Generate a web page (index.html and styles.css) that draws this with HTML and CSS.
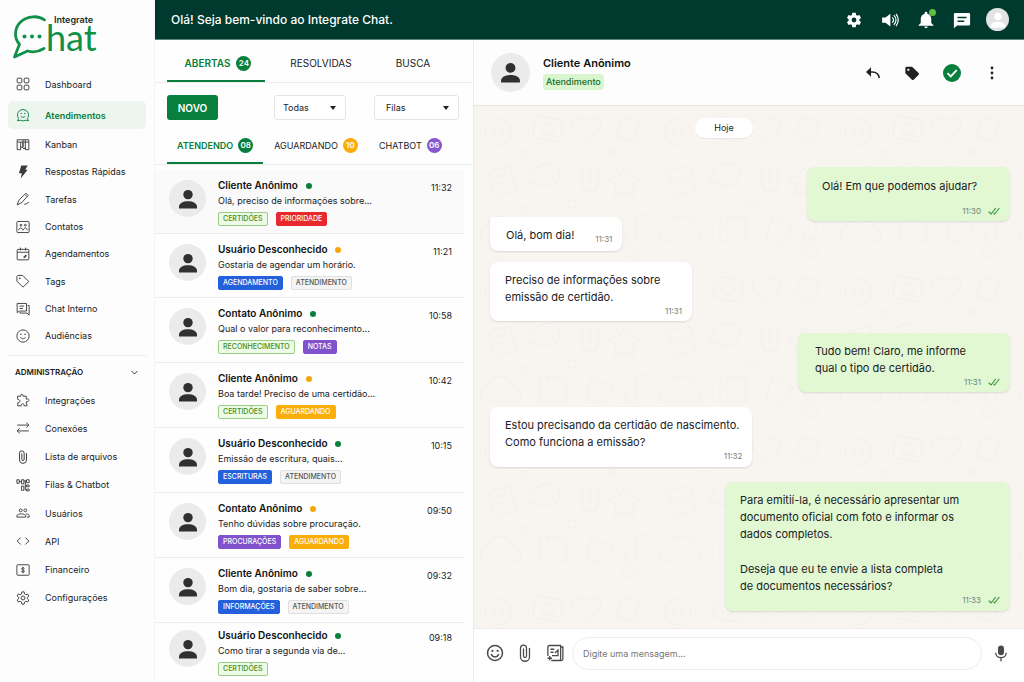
FILE: index.html
```html
<!DOCTYPE html>
<html lang="pt-BR">
<head>
<meta charset="utf-8">
<meta name="viewport" content="width=device-width, initial-scale=1">
<title>Integrate Chat</title>
<link rel="stylesheet" href="styles.css">
</head>
<body>
<svg class="sprite" aria-hidden="true">
  <symbol id="person" viewBox="0 0 20 20"><circle cx="10" cy="5.6" r="4.7"/><path d="M1 19.5v-1.6c0-3.6 4-5.6 9-5.6s9 2 9 5.6v1.6z"/></symbol>
  <symbol id="checks" viewBox="0 0 12 8"><path d="M.6 4.600 3 7 7.800 1M5.600 5.800 6.600 7l4.800-6" fill="none" stroke="currentColor" stroke-width="1.100"/></symbol>
  <symbol id="smile" viewBox="0 0 24 24"><g fill="none" stroke="currentColor" stroke-width="2"><circle cx="12" cy="12" r="10"/><path d="M7.2 14.2c1 1.9 2.800 3 4.800 3s3.800-1.100 4.800-3" stroke-linecap="round"/></g><circle cx="8.500" cy="9" r="1.500" fill="currentColor"/><circle cx="15.500" cy="9" r="1.500" fill="currentColor"/></symbol>
  <symbol id="clip" viewBox="0 0 24 24"><path d="M18 6V17a6 6 0 0 1-12 0V5.500a4 4 0 0 1 8 0V16a2 2 0 0 1-4 0V6.500" fill="none" stroke="currentColor" stroke-width="1.700" stroke-linecap="round"/></symbol>
</svg>
<div class="app">
  <aside class="sidebar">
    <a class="logo" href="#" aria-label="Integrate Chat">
      <svg viewBox="0 0 92 50" role="img" aria-label="Integrate Chat">
        <path d="M32.500 8C29 5.300 25 4.500 21 4.800 10.500 5.500 3.500 13 3.500 22c0 4 1.500 7.500 4 10.300L2.500 45l13-6c6.500 1.800 12.500 0 16.500-2.500" fill="none" stroke="#109048" stroke-width="2.800" stroke-linecap="round" stroke-linejoin="round"/>
        <circle cx="12.500" cy="24.500" r="2"/><circle cx="20" cy="24.500" r="2"/><circle cx="27.500" cy="24.500" r="2"/>
        <text class="logo-big" x="34" y="39">hat</text>
        <text class="logo-small" x="42" y="11">Integrate</text>
      </svg>
    </a>
    <nav aria-label="Principal">
      <ul class="menu menu-main">
        <li><a href="#"><svg viewBox="0 0 24 24"><g class="ln"><rect x="2" y="2" width="8" height="8" rx="1.500"/><rect x="14" y="2" width="8" height="8" rx="1.500"/><rect x="2" y="14" width="8" height="8" rx="1.500"/><rect x="14" y="14" width="8" height="8" rx="1.500"/></g></svg>Dashboard</a></li>
        <li class="current"><a href="#" aria-current="page"><svg viewBox="0 0 24 24"><g class="ln"><path d="M4.500 18A9.500 9.500 0 1 1 19.500 18l2 4-5-1a10 10 0 0 1-9 0l-5 1z"/><path d="M8 14c2 2.500 6 2.500 8 0"/></g><circle cx="9" cy="9.500" r="1.200"/><circle cx="15" cy="9.500" r="1.200"/></svg>Atendimentos</a></li>
        <li><a href="#"><svg viewBox="0 0 24 24"><g class="ln"><path d="M2 3h20v4H2zM2 7v13h6V7M8 16h4V3M12 7v9M16 3v15h-4M22 7v13h-6v-4"/></g></svg>Kanban</a></li>
        <li><a href="#"><svg viewBox="0 0 24 24"><path d="M9 1h11l-4 7h4L8 23l2-9H5z"/></svg>Respostas Rápidas</a></li>
        <li><a href="#"><svg viewBox="0 0 24 24"><g class="ln"><path d="M2 22l3-8L15 4l4 4L10 18zM15 4l2-2 4 4-2 2M14 21c3 0 6-1 8-4"/></g></svg>Tarefas</a></li>
        <li><a href="#"><svg viewBox="0 0 24 24"><g class="ln"><rect x="1.500" y="2.500" width="21" height="19" rx="1.500"/><circle cx="8.500" cy="9" r="1.600"/><circle cx="16" cy="9" r="1.600"/><path d="M4.500 17.500c1-5 6-5 7.500 0 1.500-5 6.500-5 7.500 0"/></g></svg>Contatos</a></li>
        <li><a href="#"><svg viewBox="0 0 24 24"><g class="ln"><rect x="2" y="4" width="20" height="18" rx="1.500"/><path d="M2 9h20M7.500 1V6M16.500 1V6"/></g><path d="M18 13v3l-3 3h-2v-3h2v-2z"/></svg>Agendamentos</a></li>
        <li><a href="#"><svg viewBox="0 0 24 24"><g class="ln"><path d="M1.500 4v8.500l10.500 10 10-9.500L11.500 2.500H3z" stroke-linejoin="round"/></g><circle cx="6.500" cy="7.500" r="1.300"/></svg>Tags</a></li>
        <li><a href="#"><svg viewBox="0 0 24 24"><g class="ln"><path d="M2 2.500h16v13H6.500L2 18zM6 7h8M6 11h6M20 6h2.500v16.500L19 19H7v-2"/></g></svg>Chat Interno</a></li>
        <li><a href="#"><svg viewBox="0 0 24 24"><g class="ln"><circle cx="12" cy="12" r="10.500"/><path d="M7.500 14c2 3.500 7 3.500 9 0"/></g><circle cx="8.500" cy="9" r="1.300"/><circle cx="15.500" cy="9" r="1.300"/></svg>Audiências</a></li>
      </ul>
      <button class="section" type="button" aria-expanded="true">ADMINISTRAÇÃO <svg viewBox="0 0 12 12"><path class="chevron" d="M2 4l4 4 4-4"/></svg></button>
      <ul class="menu menu-admin">
        <li><a href="#"><svg viewBox="0 0 24 24"><path class="ln" stroke-linejoin="round" d="M2.500 5.500h6C6.500 1 13.500 1 12 5.500h5.500v5c6-2 6.500 5 0 4.500l1.500 7h-5c0-5-5-5-5 0H3v-5.500c5 0 5-5 0-5.500z"/></svg>Integrações</a></li>
        <li><a href="#"><svg viewBox="0 0 24 24"><path class="ln" d="M2 7h20M17.500 2.500 22 7l-4.500 4.500M22 17H2M6.500 12.500 2 17l4.500 4.500"/></svg>Conexões</a></li>
        <li><a href="#"><svg viewBox="0 0 24 24"><use href="#clip"/></svg>Lista de arquivos</a></li>
        <li><a href="#"><svg viewBox="0 0 24 24"><path class="ln" d="M1.500 3h4v6h-4zM9.500 3h4v7h-4zM18 3h4.500v5H18zM5.500 6h4M13.500 5H18M9.500 14h4v7h-4zM18 12h4.500v3H18zM18 19h4.500v3H18zM16 5v15.500h2M16 13.500h2"/></svg>Filas &amp; Chatbot</a></li>
        <li><a href="#"><svg viewBox="0 0 24 24"><g class="ln"><circle cx="8" cy="7.500" r="2.500"/><circle cx="16" cy="7.500" r="2.500"/><path d="M1.500 19v-2.500c1-4 14-4 15 0V19zM17 13.500c3.500.300 5.500 1.500 5.500 3V19h-4"/></g></svg>Usuários</a></li>
        <li><a href="#"><svg viewBox="0 0 24 24"><path class="ln" d="M8 6l-6 6 6 6M16 6l6 6-6 6"/></svg>API</a></li>
        <li><a href="#"><svg viewBox="0 0 24 24"><g class="ln"><rect x="1.500" y="3" width="21" height="18" rx="1.500"/><path d="M14.500 9.500c-1-2-5-1.700-5 .500 0 2.500 5 1.500 5 4 0 2.200-4.500 2.300-5.500.300M12 6.500v11"/></g></svg>Financeiro</a></li>
        <li><a href="#"><svg viewBox="0 0 24 24"><g class="ln" stroke-linejoin="round"><path d="M10 1.500h4l.600 3.500 2.200 1.300 3.200-1.200 2 3.500-2.600 2.200v2.400l2.600 2.200-2 3.500-3.200-1.200-2.200 1.300-.600 3.500h-4l-.600-3.500-2.200-1.300L4 18.900l-2-3.500 2.600-2.200v-2.400L2 8.600l2-3.500 3.200 1.200L9.400 5z"/><circle cx="12" cy="12" r="3.300"/></g></svg>Configurações</a></li>
      </ul>
    </nav>
  </aside>

  <header class="topbar">
    <p>Olá! Seja bem-vindo ao Integrate Chat.</p>
    <div class="top-actions">
      <button type="button" aria-label="Configurações"><svg viewBox="0 0 24 24"><path d="M19.140 12.940c.040-.300.060-.610.060-.940 0-.320-.020-.640-.070-.940l2.030-1.580c.180-.140.230-.410.120-.610l-1.920-3.320c-.120-.220-.370-.290-.590-.220l-2.390.960c-.500-.380-1.030-.700-1.620-.940l-.360-2.540c-.040-.240-.240-.410-.480-.410h-3.840c-.240 0-.430.170-.470.410l-.360 2.540c-.590.240-1.130.570-1.620.940l-2.390-.960c-.220-.080-.470 0-.590.220L2.740 8.870c-.120.210-.080.470.120.610l2.030 1.580c-.050.300-.090.630-.090.940s.020.640.070.940l-2.030 1.580c-.180.140-.230.410-.120.610l1.920 3.320c.120.220.370.290.590.220l2.390-.960c.500.380 1.030.700 1.620.940l.360 2.540c.050.240.240.410.480.410h3.840c.240 0 .440-.170.470-.410l.360-2.540c.590-.240 1.130-.560 1.620-.940l2.390.960c.220.080.470 0 .590-.220l1.920-3.320c.120-.220.070-.470-.120-.610zM12 15.200a3.200 3.200 0 1 1 0-6.400 3.200 3.200 0 0 1 0 6.400z"/></svg></button>
      <button type="button" aria-label="Som"><svg viewBox="0 0 24 24"><path d="M1.500 8.500v7H6l6.500 5V3.500L6 8.500z"/><path d="M15 8.500c2 2 2 5 0 7M17 5.500c4 3.500 4 9.500 0 13M20 4c4 4.500 4 11.500 0 16" fill="none" stroke="currentColor" stroke-width="1.600"/></svg></button>
      <button class="bell" type="button" aria-label="Notificações"><svg viewBox="0 0 24 24"><path d="M12 23a2.300 2.300 0 0 0 2.300-2.200H9.700A2.300 2.300 0 0 0 12 23zM19 16v-5.500c0-3.500-2-6.200-5.200-7V2.800a1.800 1.800 0 0 0-3.600 0v.700C7 4.300 5 7 5 10.500V16l-3 3v.800h20V19z"/></svg><span class="bell-dot"></span></button>
      <button type="button" aria-label="Mensagens"><svg viewBox="0 0 24 24"><path fill-rule="evenodd" d="M3 2.500h18a1.800 1.800 0 0 1 1.800 1.800v13.200a1.800 1.800 0 0 1-1.800 1.800H5.500L1.200 23V4.300A1.800 1.800 0 0 1 3 2.500zM6 7.500v2h12v-2zM6 12.500v2h9v-2z"/></svg></button>
      <button class="me" type="button" aria-label="Perfil"><svg viewBox="0 0 20 20"><use href="#person"/></svg></button>
    </div>
  </header>

  <section class="inbox" aria-label="Conversas">
    <div class="tabs tabs-status">
      <button class="tab selected" type="button">ABERTAS <span class="count green">24</span></button>
      <button class="tab" type="button">RESOLVIDAS</button>
      <button class="tab" type="button">BUSCA</button>
    </div>
    <div class="filters">
      <button class="new" type="button">NOVO</button>
      <select class="filter-all" aria-label="Filtro"><option>Todas</option></select>
      <select class="filter-queue" aria-label="Filas"><option>Filas</option></select>
    </div>
    <div class="tabs tabs-queue">
      <button class="tab selected" type="button">ATENDENDO <span class="count green">08</span></button>
      <button class="tab" type="button">AGUARDANDO <span class="count amber">10</span></button>
      <button class="tab" type="button">CHATBOT <span class="count purple">06</span></button>
    </div>
    <ul class="conversations">
      <li class="conversation open"><span class="avatar"><svg><use href="#person"/></svg></span><div class="summary"><h3>Cliente Anônimo <i class="dot on"></i></h3><p>Olá, preciso de informações sobre...</p><div class="tags"><span class="tag lime">CERTIDÕES</span><span class="tag red">PRIORIDADE</span></div></div><time>11:32</time></li>
      <li class="conversation"><span class="avatar"><svg><use href="#person"/></svg></span><div class="summary"><h3>Usuário Desconhecido <i class="dot"></i></h3><p>Gostaria de agendar um horário.</p><div class="tags"><span class="tag blue">AGENDAMENTO</span><span class="tag gray">ATENDIMENTO</span></div></div><time>11:21</time></li>
      <li class="conversation"><span class="avatar"><svg><use href="#person"/></svg></span><div class="summary"><h3>Contato Anônimo <i class="dot on"></i></h3><p>Qual o valor para reconhecimento...</p><div class="tags"><span class="tag lime">RECONHECIMENTO</span><span class="tag violet">NOTAS</span></div></div><time>10:58</time></li>
      <li class="conversation"><span class="avatar"><svg><use href="#person"/></svg></span><div class="summary"><h3>Cliente Anônimo <i class="dot"></i></h3><p>Boa tarde! Preciso de uma certidão...</p><div class="tags"><span class="tag lime">CERTIDÕES</span><span class="tag orange">AGUARDANDO</span></div></div><time>10:42</time></li>
      <li class="conversation"><span class="avatar"><svg><use href="#person"/></svg></span><div class="summary"><h3>Usuário Desconhecido <i class="dot on"></i></h3><p>Emissão de escritura, quais...</p><div class="tags"><span class="tag blue">ESCRITURAS</span><span class="tag gray">ATENDIMENTO</span></div></div><time>10:15</time></li>
      <li class="conversation"><span class="avatar"><svg><use href="#person"/></svg></span><div class="summary"><h3>Contato Anônimo <i class="dot"></i></h3><p>Tenho dúvidas sobre procuração.</p><div class="tags"><span class="tag violet">PROCURAÇÕES</span><span class="tag orange">AGUARDANDO</span></div></div><time>09:50</time></li>
      <li class="conversation"><span class="avatar"><svg><use href="#person"/></svg></span><div class="summary"><h3>Cliente Anônimo <i class="dot on"></i></h3><p>Bom dia, gostaria de saber sobre...</p><div class="tags"><span class="tag blue">INFORMAÇÕES</span><span class="tag gray">ATENDIMENTO</span></div></div><time>09:32</time></li>
      <li class="conversation"><span class="avatar"><svg><use href="#person"/></svg></span><div class="summary"><h3>Usuário Desconhecido <i class="dot on"></i></h3><p>Como tirar a segunda via de...</p><div class="tags"><span class="tag lime">CERTIDÕES</span></div></div><time>09:18</time></li>
    </ul>
  </section>

  <main class="chat">
    <header class="chat-head">
      <span class="avatar avatar-large"><svg><use href="#person"/></svg></span>
      <div class="contact"><h2>Cliente Anônimo</h2><span class="state">Atendimento</span></div>
      <div class="chat-actions">
        <button type="button" aria-label="Responder"><svg viewBox="0 0 24 24"><path d="M4 10.500h7c6 0 9.500 3 10.500 9" fill="none" stroke="currentColor" stroke-width="2.400"/><path d="M1.500 10.500 9 3.500v14z"/></svg></button>
        <button type="button" aria-label="Etiqueta"><svg viewBox="0 0 24 24"><path fill-rule="evenodd" d="M2 4.500a2 2 0 0 1 2-2h8L22 12a2 2 0 0 1 0 2.500l-7.500 7.500a2 2 0 0 1-2.700 0L2 12.500zM6.500 5.500a1.700 1.700 0 1 0 0 3.400 1.700 1.700 0 0 0 0-3.400z"/></svg></button>
        <button class="resolve" type="button" aria-label="Resolver"><svg viewBox="0 0 18 18"><circle cx="9" cy="9" r="9"/><path d="M4.500 9.200l3.200 3.200 6-6.200" fill="none" stroke="#fff" stroke-width="1.900"/></svg></button>
        <button type="button" aria-label="Mais opções"><svg viewBox="0 0 24 24"><circle cx="12" cy="4.500" r="2.100"/><circle cx="12" cy="12" r="2.100"/><circle cx="12" cy="19.500" r="2.100"/></svg></button>
      </div>
    </header>
    <div class="thread">
      <span class="day">Hoje</span>
      <div class="message sent short"><p>Olá! Em que podemos ajudar?</p><footer>11:30 <svg><use href="#checks"/></svg></footer></div>
      <div class="message inline"><p>Olá, bom dia!</p><footer>11:31</footer></div>
      <div class="message medium"><p>Preciso de informações sobre<br>emissão de certidão.</p><footer>11:31</footer></div>
      <div class="message sent regular"><p>Tudo bem! Claro, me informe<br>qual o tipo de certidão.</p><footer>11:31 <svg><use href="#checks"/></svg></footer></div>
      <div class="message wide"><p>Estou precisando da certidão de nascimento.<br>Como funciona a emissão?</p><footer>11:32</footer></div>
      <div class="message sent long"><p>Para emitií-la, é necessário apresentar um<br>documento oficial com foto e informar os<br>dados completos.</p><p>Deseja que eu te envie a lista completa<br>de documentos necessários?</p><footer>11:33 <svg><use href="#checks"/></svg></footer></div>
    </div>
    <form class="composer">
      <button type="button" aria-label="Emoji"><svg viewBox="0 0 24 24"><use href="#smile"/></svg></button>
      <button type="button" aria-label="Anexar"><svg viewBox="0 0 24 24"><use href="#clip"/></svg></button>
      <button type="button" aria-label="Resposta rápida"><svg viewBox="0 0 24 24"><g fill="none" stroke="currentColor" stroke-width="1.700"><path d="M2.500 16V4a2 2 0 0 1 2-2h15v18a2 2 0 0 1-2 2H7M2 19h6M5 16v6M19.500 4h3v16a2 2 0 0 1-2 2H17M6 7h5M6 11h4M8 15.500h8V8l-4 4"/></g></svg></button>
      <input type="text" aria-label="Mensagem" placeholder="Digite uma mensagem...">
      <button type="button" aria-label="Gravar áudio"><svg viewBox="0 0 24 24"><rect x="8" y="2" width="8" height="13" rx="4"/><path d="M5 11.500c0 9 14 9 14 0M12 18v5" fill="none" stroke="currentColor" stroke-width="1.800"/></svg></button>
    </form>
  </main>
</div>
</body>
</html>
```

FILE: styles.css
```css
:root {
  --green: #087f3c;
  --ink: #202124;
  --line: #ebecec;
}

* { box-sizing: border-box; }

body {
  margin: 0;
  font-family: Inter, "Liberation Sans", sans-serif;
  font-size: 10px;
  color: var(--ink);
  background: #fdfdfd;
}

h2, h3, p, ul { margin: 0; padding: 0; }
ul { list-style: none; }
a { color: inherit; text-decoration: none; }
svg { display: block; fill: currentColor; flex: none; }
.sprite { position: absolute; width: 0; height: 0; }
.ln { fill: none; stroke: currentColor; stroke-width: 1.6; }
.chevron { fill: none; stroke: currentColor; stroke-width: 1.2; }

button, input, select { font: inherit; color: inherit; }
button { border: 0; padding: 0; background: none; cursor: pointer; }

.app {
  display: grid;
  grid-template-columns: 155px 319px minmax(0, 1fr);
  grid-template-rows: 40px minmax(0, 1fr);
  height: 100vh;
  overflow: hidden;
}

/* Sidebar */
.sidebar { grid-row: 1 / 3; border-right: 1px solid #f3f3f3; background: #fdfdfd; }
.logo { display: block; padding: 12px 0 0 12px; color: #109048; }
.logo svg { width: 92px; height: 50px; }
.logo-big { font: 36px Lato, sans-serif; fill: #109048; }
.logo-small { font: 600 9px Inter, sans-serif; fill: #17302a; }
.sidebar nav { padding: 10px 8px 0; }
.menu { display: flex; flex-direction: column; justify-content: space-between; }
.menu-main { height: 276px; }
.menu-admin { height: 222px; }
.menu a {
  display: flex;
  align-items: center;
  gap: 15px;
  height: 24px;
  padding-left: 8px;
  font-size: 9px;
  border-radius: 5px;
}
.menu svg { width: 14px; height: 14px; color: #3c3c3e; }
.menu .current { margin-top: 2px; }
.menu .current a { height: 28px; font-weight: 600; color: var(--green); background: #edf5ef; }
.menu .current svg { color: var(--green); }
.section {
  display: flex;
  justify-content: space-between;
  align-items: center;
  width: 100%;
  height: 33px;
  margin-top: 7px;
  padding: 0 7px;
  border-top: 1px solid var(--line);
  font-size: 8px;
  font-weight: 600;
}
.section svg { width: 9px; height: 9px; }

/* Top bar */
.topbar {
  grid-column: 2 / 4;
  display: flex;
  justify-content: space-between;
  align-items: center;
  padding: 0 15px 0 16px;
  border-bottom: 1px solid #5c857b;
  color: #fff;
  background: #003a2e;
}
.topbar p { font-size: 12px; font-weight: 500; }
.top-actions { display: flex; align-items: center; gap: 18px; }
.top-actions svg { width: 18px; height: 18px; }
.bell { position: relative; }
.bell-dot { position: absolute; top: -2px; right: -1px; width: 7px; height: 7px; border-radius: 50%; background: #62bd42; }
.me { width: 23px; height: 23px; margin-left: -3px; border-radius: 50%; overflow: hidden; display: grid; place-items: center; color: #fff; background: #e2e4e4; }
.top-actions .me svg { width: 16px; height: 16px; }

/* Inbox */
.inbox { display: flex; flex-direction: column; min-height: 0; border-right: 1px solid var(--line); background: #fefefe; }
.tabs { display: flex; padding-left: 12px; border-bottom: 1px solid var(--line); }
.tab { display: flex; align-items: center; justify-content: center; gap: 6px; border-bottom: 2px solid transparent; font-size: 10px; white-space: nowrap; }
.tab.selected { color: var(--green); border-color: var(--green); font-weight: 600; }
.tabs-status { display: grid; grid-template-columns: 98fr 112fr 72fr; height: 43px; padding-right: 24px; }
.tabs-status .tab { padding-top: 6px; }
.tabs-status .selected { padding-left: 4px; }
.tabs-queue { height: 37px; gap: 1px; }
.tabs-queue .tab { padding: 0 10px; gap: 5px; font-size: 9px; }
.count { display: grid; place-items: center; width: 15px; height: 15px; border-radius: 50%; color: #fff; font-size: 8px; font-weight: 600; }
.green { background: var(--green); }
.amber { background: #fcac09; }
.purple { background: #8656cf; }

.filters { display: flex; padding: 12px 14px 8px 12px; }
.new { width: 51px; height: 25px; border-radius: 3px; color: #fff; background: var(--green); font-weight: 600; }
select {
  appearance: none;
  height: 25px;
  border: 1px solid #e4e5e6;
  border-radius: 3px;
  background: #fff url("data:image/svg+xml,%3Csvg xmlns='http://www.w3.org/2000/svg' width='6' height='4'%3E%3Cpath d='M0 0h6L3 4z' fill='%23202124'/%3E%3C/svg%3E") no-repeat right 9px center;
  font-size: 9px;
}
.filter-all { width: 72px; margin: 0 28px 0 auto; padding: 0 8px; }
.filter-queue { width: 85px; padding: 0 11px; }

.conversations { flex: 1; min-height: 0; padding: 5px 9px 0 0; overflow: hidden; }
.conversation { display: flex; gap: 12px; height: 64px; padding: 8px 12px 0 14px; border-bottom: 1px solid var(--line); }
.conversation:nth-child(n + 3) { height: 65px; }
.conversation:last-child { padding-top: 5px; border-bottom: 0; }
.conversation.open { background: #fafafa; }
.avatar { display: grid; place-items: center; flex: none; width: 37px; height: 37px; margin-top: 2px; border-radius: 50%; color: #303030; background: #ebebeb; }
.avatar svg { width: 20px; height: 20px; }
.summary { flex: 1; min-width: 0; line-height: 15px; }
.summary h3 { display: flex; align-items: center; gap: 8px; font-size: 10px; font-weight: 600; color: #111; }
.summary p { font-size: 9px; white-space: nowrap; }
.dot { width: 6px; height: 6px; border-radius: 50%; background: #f6a609; }
.dot.on { background: var(--green); }
.conversation time { padding-top: 4px; font-size: 9px; line-height: 12px; }
.tags { display: flex; gap: 8px; margin-top: 4px; }
.tag { padding: 0 4px; border: 1px solid; border-radius: 2px; font-size: 7px; font-weight: 500; line-height: 12px; white-space: nowrap; }
.lime { color: #3f8f25; background: #eefbe6; border-color: #9bce85; }
.red { color: #fff; background: #e8282d; border-color: #e8282d; }
.blue { color: #fff; background: #2260dc; border-color: #2260dc; }
.gray { color: #555; background: #f4f4f4; border-color: #e0e0e0; }
.violet { color: #fff; background: #8252cc; border-color: #8252cc; }
.orange { color: #fff; background: #fbad08; border-color: #fbad08; }

/* Chat */
.chat { display: flex; flex-direction: column; min-height: 0; }
.chat-head { display: flex; align-items: center; gap: 13px; height: 66px; padding: 0 24px 0 17px; border-bottom: 1px solid #e8e6e3; background: #fdfdfd; }
.avatar-large { width: 39px; height: 39px; margin: 0; }
.avatar-large svg { width: 21px; height: 21px; }
.contact h2 { margin-bottom: 4px; font-size: 11px; font-weight: 600; line-height: 14px; color: #111; }
.state { display: block; width: max-content; padding: 0 3px; border-radius: 3px; font-size: 9px; font-weight: 500; line-height: 16px; color: #176c2c; background: #d9f6ce; }
.chat-actions { display: flex; align-items: center; gap: 23px; margin-left: auto; }
.chat-actions svg { width: 16px; height: 16px; }
.chat-actions .resolve { color: var(--green); }
.chat-actions .resolve svg { width: 18px; height: 18px; }

.thread {
  flex: 1;
  display: flex;
  flex-direction: column;
  align-items: flex-start;
  min-height: 0;
  padding: 12px 14px 0 16px;
  overflow: hidden;
  background: #f8f5f1 url("data:image/svg+xml,%3Csvg xmlns='http://www.w3.org/2000/svg' width='180' height='160'%3E%3Cg fill='none' stroke='%23f3f0ec' stroke-width='1.200'%3E%3Ccircle cx='24' cy='26' r='13'/%3E%3Ccircle cx='24' cy='26' r='5'/%3E%3Crect x='60' y='12' width='28' height='22' rx='4' transform='rotate(10 74 23)'/%3E%3Ccircle cx='74' cy='23' r='6'/%3E%3Cpath d='M112 16c8-12 22 0 10 12l-10 8-10-8c-10-10 2-22 10-12zM148 10l18 6-6 20-18-6zM14 66l22-6 6 24-22 6zM20 72l12-3M22 78l12-3M66 60c10-8 24 2 18 14-4 8-16 8-22 2l-8 3 4-9c0-4 4-8 8-10zM116 58v28M108 62v14c0 14 16 14 16 0V60M150 62l6 8 10 2-7 8 1 10-10-4-9 4 1-10-7-8 10-2zM12 120c6-14 26-12 28 2 10 0 10 14 0 14H16c-12 0-12-14-4-16zM66 112h26v24H66zM66 120h26M74 106v10M84 106v10M118 112l22 8-14 18-14-6zM162 106v22M162 128a6 5 0 1 1-6-4M162 106l10 4'/%3E%3Ccircle cx='156' cy='144' r='8'/%3E%3Ccircle cx='50' cy='48' r='3'/%3E%3Ccircle cx='98' cy='98' r='4'/%3E%3Ccircle cx='138' cy='46' r='3'/%3E%3Ccircle cx='50' cy='104' r='3'/%3E%3C/g%3E%3C/svg%3E");
}
.day { align-self: center; margin: 0 52px 29px 0; padding: 0 19px; border-radius: 10px; font-size: 9px; line-height: 20px; background: #fff; box-shadow: 0 1px 1px #0000000d; }
.message { padding: 10px 15px 5px; border-radius: 8px; font-size: 11px; line-height: 17px; background: #fff; box-shadow: 0 1px 2px #0000001f; }
.message p + p { margin-top: 18px; }
.message footer { display: flex; justify-content: flex-end; align-items: center; gap: 7px; margin-right: -5px; font-size: 8px; line-height: 10px; color: #75807a; }
.message footer svg { width: 12px; height: 8px; color: #33933b; }
.sent { align-self: flex-end; background: #e1f8d3; }
.short { min-width: 203px; padding-top: 11px; }
.short footer { margin-top: 11px; }
.inline { display: flex; gap: 21px; margin-top: -4px; padding: 10px 15px 7px 16px; border-top-left-radius: 2px; }
.inline footer { align-self: flex-end; }
.medium { min-width: 202px; margin-top: 11px; }
.regular { min-width: 212px; margin-top: 12px; padding-left: 17px; }
.wide { min-width: 262px; margin-top: 15px; padding: 10px 13px 6px 15px; }
.wide footer { margin-right: -3px; }
.long { min-width: 285px; margin-top: 15px; padding-bottom: 6px; }

/* Composer */
.composer { display: flex; align-items: center; height: 54px; padding: 0 14px 5px 12px; border-top: 1px solid #eeeceb; background: #fff; color: #4a4a4a; }
.composer button { margin-right: 12px; }
.composer svg { width: 18px; height: 18px; }
.composer button:nth-of-type(3) { margin-right: 8px; }
.composer button:last-child { margin: 0 0 0 10px; }
.composer input { flex: 1; min-width: 0; height: 33px; padding: 0 10px; border: 1px solid #ececec; border-radius: 17px; background: #fff; font-size: 9px; }
.composer input::placeholder { color: #777; opacity: 1; }
```
